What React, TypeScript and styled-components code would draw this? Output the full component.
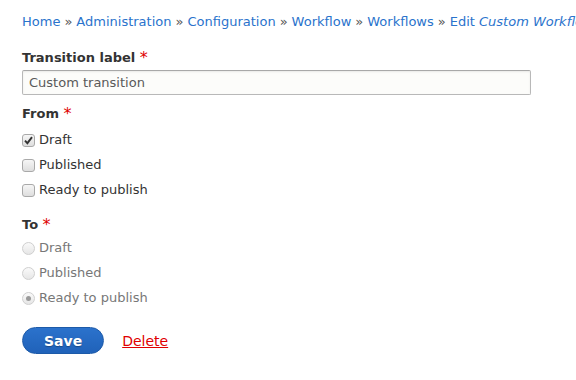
import styled, { createGlobalStyle } from 'styled-components';

const GlobalStyle = createGlobalStyle`
  html, body {
    margin: 0;
    padding: 0;
    background: #ffffff;
    overflow: hidden;
  }
  body {
    font-family: "DejaVu Sans", Verdana, sans-serif;
    font-size: 13px;
    color: #333333;
  }
`;

const Page = styled.div`
  padding: 14px 0 0 22px;
  width: 554px;
`;

const Breadcrumb = styled.nav`
  white-space: nowrap;
  overflow: hidden;
  line-height: 16px;
  color: #333333;
`;

const Crumb = styled.a`
  color: #2a73cc;
  text-decoration: none;
`;

const Sep = styled.span`
  color: #555555;
  padding: 0 4px;
`;

const Form = styled.form`
  display: flex;
  flex-direction: column;
  margin-top: 20px;
`;

const FieldLabel = styled.label`
  display: block;
  font-weight: bold;
  height: 16px;
  line-height: 16px;
  color: #333333;
`;

const Required = styled.span`
  color: #e00000;
  font-size: 16px;
  font-weight: normal;
  line-height: 0;
  vertical-align: -1px;
`;

const TextInput = styled.input`
  box-sizing: border-box;
  width: 509px;
  height: 25px;
  margin: 4px 0 0;
  padding: 0 6px;
  font-family: inherit;
  font-size: 13px;
  color: #595959;
  background: #fcfcfa;
  border: 1px solid #b8b8b8;
  border-top-color: #a8a8a8;
  border-radius: 2px;
  box-shadow: inset 0 1px 2px rgba(0, 0, 0, 0.08);
  outline: none;
`;

const Group = styled.fieldset<{ $top: number }>`
  border: 0;
  padding: 0;
  margin: ${(p) => p.$top}px 0 0;
`;

const Options = styled.div<{ $top: number }>`
  display: flex;
  flex-direction: column;
  gap: 9px;
  margin-top: ${(p) => p.$top}px;
`;

const Option = styled.label<{ $disabled?: boolean }>`
  display: flex;
  align-items: center;
  gap: 4px;
  height: 16px;
  line-height: 16px;
  color: ${(p) => (p.$disabled ? '#777777' : '#333333')};
`;

const CheckBox = styled.span`
  box-sizing: border-box;
  width: 13px;
  height: 13px;
  border: 1px solid #a9a9a9;
  border-radius: 3px;
  background: linear-gradient(#f6f6f6, #dedede);
  display: flex;
  align-items: center;
  justify-content: center;
`;

const RadioBox = styled.span<{ $checked?: boolean }>`
  box-sizing: border-box;
  width: 13px;
  height: 13px;
  border: 1px solid #cfcfcf;
  border-radius: 50%;
  background: linear-gradient(#fafafa, #e6e6e6);
  display: flex;
  align-items: center;
  justify-content: center;
  &::after {
    content: '';
    display: ${(p) => (p.$checked ? 'block' : 'none')};
    width: 5px;
    height: 5px;
    border-radius: 50%;
    background: #9a9a9a;
  }
`;

const Actions = styled.div`
  display: flex;
  align-items: center;
  gap: 18px;
  margin-top: 21px;
`;

const PrimaryButton = styled.button`
  box-sizing: border-box;
  height: 27px;
  padding: 0 21px;
  border: 1px solid #1d5aa8;
  border-radius: 20px;
  background: linear-gradient(#2b72cc, #2062b9);
  color: #ffffff;
  font-family: inherit;
  font-size: 14px;
  font-weight: bold;
  text-shadow: 0 1px 1px rgba(0, 0, 0, 0.3);
  cursor: pointer;
`;

const DangerLink = styled.a`
  color: #e00000;
  font-size: 14px;
  text-decoration: underline;
`;

function Check() {
  return (
    <svg width="9" height="9" viewBox="0 0 9 9">
      <path d="M1 4.6 L3.4 7.2 L8 1.2" fill="none" stroke="#333" strokeWidth="1.9" />
    </svg>
  );
}

const states = ['Draft', 'Published', 'Ready to publish'];

export default function App() {
  return (
    <>
      <GlobalStyle />
      <Page>
        <Breadcrumb>
          <Crumb>Home</Crumb>
          <Sep>»</Sep>
          <Crumb>Administration</Crumb>
          <Sep>»</Sep>
          <Crumb>Configuration</Crumb>
          <Sep>»</Sep>
          <Crumb>Workflow</Crumb>
          <Sep>»</Sep>
          <Crumb>Workflows</Crumb>
          <Sep>»</Sep>
          <Crumb>
            Edit <em>Custom Workflow</em>
          </Crumb>
        </Breadcrumb>
        <Form>
          <FieldLabel>
            Transition label <Required>*</Required>
          </FieldLabel>
          <TextInput defaultValue="Custom transition" />

          <Group $top={11}>
            <FieldLabel>
              From <Required>*</Required>
            </FieldLabel>
            <Options $top={10}>
              {states.map((s, i) => (
                <Option key={s}>
                  <CheckBox>{i === 0 && <Check />}</CheckBox>
                  {s}
                </Option>
              ))}
            </Options>
          </Group>

          <Group $top={19}>
            <FieldLabel>
              To <Required>*</Required>
            </FieldLabel>
            <Options $top={7}>
              {states.map((s, i) => (
                <Option key={s} $disabled>
                  <RadioBox $checked={i === 2} />
                  {s}
                </Option>
              ))}
            </Options>
          </Group>

          <Actions>
            <PrimaryButton type="button">Save</PrimaryButton>
            <DangerLink>Delete</DangerLink>
          </Actions>
        </Form>
      </Page>
    </>
  );
}
